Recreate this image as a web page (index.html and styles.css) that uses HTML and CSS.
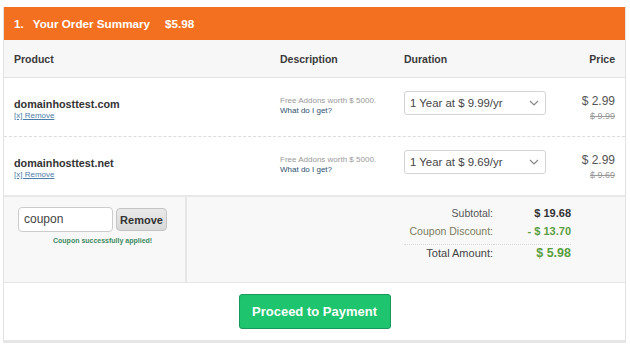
FILE: index.html
```html
<!DOCTYPE html>
<html lang="en">
<head>
    <meta charset="UTF-8">
    <meta name="viewport" content="width=device-width, initial-scale=1.0">
    <title>Order Summary</title>
    <link rel="stylesheet" href="styles.css">
</head>
<body>
    <div class="order-box">
        <div class="order-title">
            <span class="step">1.</span>
            <span>Your Order Summary</span>
            <span class="title-total">$5.98</span>
        </div>

        <div class="row head-row">
            <div>Product</div>
            <div>Description</div>
            <div>Duration</div>
            <div class="price">Price</div>
        </div>

        <div class="row item-row">
            <div>
                <div class="domain">domainhosttest.com</div>
                <a class="remove-link" href="#">[x] Remove</a>
            </div>
            <div class="desc">
                <div class="addons">Free Addons worth $ 5000.</div>
                <a class="what" href="#">What do I get?</a>
            </div>
            <div>
                <div class="select-box">
                    <span>1 Year at $ 9.99/yr</span>
                    <svg width="10" height="6" viewBox="0 0 10 6"><path d="M1 1l4 4 4-4" fill="none" stroke="#888" stroke-width="1.2"/></svg>
                </div>
            </div>
            <div class="price">
                <div class="now">$ 2.99</div>
                <div class="was">$ 9.99</div>
            </div>
        </div>

        <div class="row item-row second">
            <div>
                <div class="domain">domainhosttest.net</div>
                <a class="remove-link" href="#">[x] Remove</a>
            </div>
            <div class="desc">
                <div class="addons">Free Addons worth $ 5000.</div>
                <a class="what" href="#">What do I get?</a>
            </div>
            <div>
                <div class="select-box">
                    <span>1 Year at $ 9.69/yr</span>
                    <svg width="10" height="6" viewBox="0 0 10 6"><path d="M1 1l4 4 4-4" fill="none" stroke="#888" stroke-width="1.2"/></svg>
                </div>
            </div>
            <div class="price">
                <div class="now">$ 2.99</div>
                <div class="was">$ 9.69</div>
            </div>
        </div>

        <div class="summary">
            <div class="coupon-cell">
                <div class="coupon-form">
                    <div class="coupon-input">coupon</div>
                    <button class="coupon-btn">Remove</button>
                </div>
                <div class="coupon-msg">Coupon successfully applied!</div>
            </div>
            <div class="totals-cell">
                <div class="totals">
                    <div class="label">Subtotal:</div>
                    <div class="value">$ 19.68</div>
                    <div class="label discount">Coupon Discount:</div>
                    <div class="value green">- $ 13.70</div>
                    <div class="label total">Total Amount:</div>
                    <div class="value total green big">$ 5.98</div>
                </div>
            </div>
        </div>

        <div class="pay-row">
            <button class="pay-btn">Proceed to Payment</button>
        </div>
    </div>
</body>
</html>
```

FILE: styles.css
```css
body {
    margin: 0;
    background: #fff;
    font-family: "Liberation Sans", Arial, sans-serif;
    color: #333;
}
.order-box {
    margin: 7px 4px 0 3px;
    border: 1px solid #e2e2e2;
    border-top: none;
    border-bottom: 3px solid #e6e6e6;
}
.order-title {
    background: #f37021;
    color: #fff;
    font-weight: bold;
    font-size: 11.7px;
    height: 33px;
    display: flex;
    align-items: center;
    padding-left: 10px;
}
.order-title .step { margin-right: 9px; }
.order-title .title-total { margin-left: 15px; }

.row {
    display: grid;
    grid-template-columns: 266px 124px 142px 1fr;
    padding: 0 10px;
    align-items: center;
}
.price { text-align: right; }
.head-row {
    height: 37px;
    background: #f7f7f7;
    border-bottom: 1px solid #e4e4e4;
    font-size: 10.5px;
    font-weight: bold;
    color: #3a3a3a;
}
.item-row {
    height: 58px;
}
.item-row.second {
    border-top: 1px dashed #dcdcdc;
}
.domain {
    font-size: 10.8px;
    font-weight: bold;
    color: #333;
    margin-top: 4px;
}
.remove-link {
    font-size: 8px;
    color: #4a7ea8;
    display: block;
    margin-top: 1px;
}
.desc { margin-top: -4px; }
.addons {
    font-size: 8px;
    color: #999;
}
.what {
    font-size: 8px;
    color: #2b4f6e;
    text-decoration: none;
    display: block;
    margin-top: 1px;
}
.select-box {
    height: 24px;
    width: 142px;
    border: 1px solid #d3d3d3;
    border-radius: 3px;
    background: #fff;
    display: flex;
    align-items: center;
    justify-content: space-between;
    padding: 0 5px;
    box-sizing: border-box;
    font-size: 11.4px;
    color: #444;
    margin-top: -8px;
}
.select-box svg { margin-right: 1px; }
.now {
    font-size: 12px;
    color: #555;
}
.was {
    font-size: 9px;
    color: #999;
    text-decoration: line-through;
    margin-top: 3px;
}

.summary {
    display: flex;
    background: #f8f8f8;
    border-top: 2px solid #e8e8e8;
    border-bottom: 1px solid #e4e4e4;
    height: 85px;
}
.coupon-cell {
    width: 167px;
    padding: 10px 0 0 14px;
    border-right: 2px solid #e6e6e6;
}
.coupon-form {
    display: flex;
    gap: 3px;
}
.coupon-input {
    width: 95px;
    height: 25px;
    box-sizing: border-box;
    background: #fff;
    border: 1px solid #ccc;
    border-radius: 4px;
    font-size: 12px;
    color: #444;
    padding: 4px 5px;
}
.coupon-btn {
    margin-top: 1px;
    width: 51px;
    height: 23px;
    border: 1px solid #c4c4c4;
    border-radius: 4px;
    background: linear-gradient(#eaeaea, #d8d8d8);
    font-family: inherit;
    font-size: 11px;
    font-weight: bold;
    color: #333;
    padding: 0;
}
.coupon-msg {
    font-size: 7px;
    font-weight: bold;
    color: #3c8a61;
    margin: 5px 0 0 35px;
}
.totals-cell {
    flex: 1;
    display: flex;
    justify-content: flex-end;
    padding: 7px 54px 0 0;
}
.totals {
    display: grid;
    grid-template-columns: 90px 77px;
    align-content: start;
    font-size: 10.5px;
}
.label {
    text-align: right;
    color: #555;
    height: 18px;
    line-height: 18px;
    padding-right: 1px;
}
.label.discount { color: #7c7c5c; }
.value {
    text-align: right;
    font-weight: bold;
    font-size: 11px;
    color: #333;
    height: 18px;
    line-height: 18px;
}
.green { color: #5a9e3e; }
.total {
    border-top: 1px dotted #d8d8d8;
    margin-top: 4px;
    height: 16px;
    line-height: 16px;
    font-size: 11px;
    color: #444;
}
.value.big {
    font-size: 12.5px;
    color: #5a9e3e;
}

.pay-row {
    height: 57px;
    display: flex;
    justify-content: center;
    align-items: center;
    background: #fff;
}
.pay-btn {
    width: 152px;
    height: 35px;
    background: #1ec46e;
    border: 1px solid #17995a;
    border-radius: 3px;
    color: #fff;
    font-family: inherit;
    font-size: 13px;
    font-weight: bold;
    margin-top: -1px;
}
```
